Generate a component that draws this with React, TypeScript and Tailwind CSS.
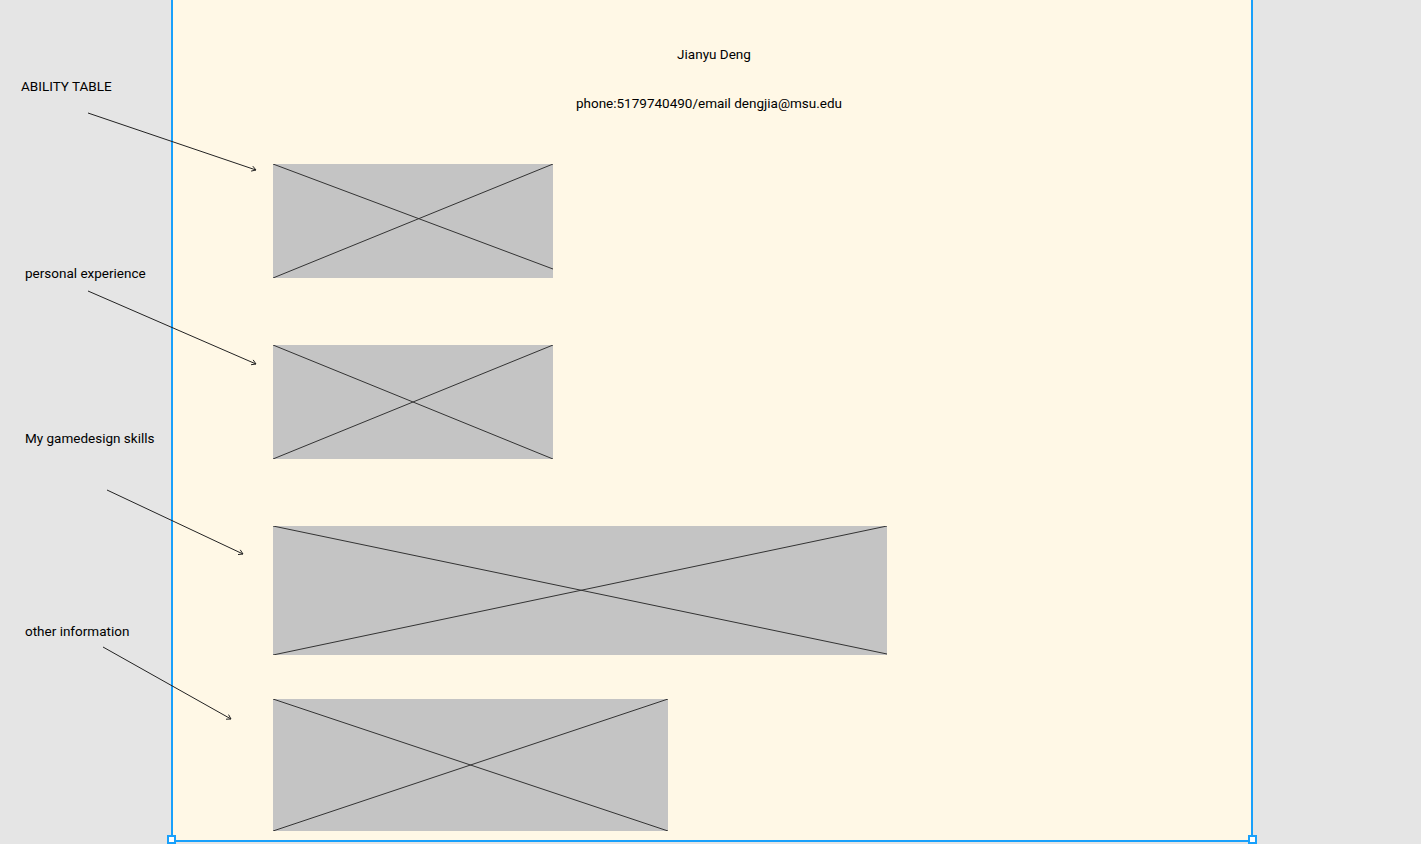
import React from "react"

const boxes = [
  { w: "w-[280px]", h: "h-[114px]", mt: "mt-0", a: [0, 0, 280, 105], b: [0, 114, 280, 0], vb: "0 0 280 114" },
  { w: "w-[280px]", h: "h-[114px]", mt: "mt-[67px]", a: [0, 0, 280, 114], b: [0, 114, 280, 0], vb: "0 0 280 114" },
  { w: "w-[614px]", h: "h-[129px]", mt: "mt-[67px]", a: [0, 0, 614, 128], b: [0, 129, 614, 0], vb: "0 0 614 129" },
  { w: "w-[395px]", h: "h-[132px]", mt: "mt-[44px]", a: [0, 0, 395, 132], b: [0, 132, 395, 0], vb: "0 0 395 132" },
]

const arrows = [
  [88, 113, 256, 170],
  [88, 291, 256, 364],
  [107, 490, 243, 554],
  [103, 647, 231, 719],
]

function Placeholder({ box }: { box: (typeof boxes)[number] }) {
  return (
    <div className={`${box.w} ${box.h} ${box.mt} bg-[#c4c4c4]`}>
      <svg className="w-full h-full block" viewBox={box.vb} preserveAspectRatio="none">
        <line x1={box.a[0]} y1={box.a[1]} x2={box.a[2]} y2={box.a[3]} stroke="#333" strokeWidth="1" />
        <line x1={box.b[0]} y1={box.b[1]} x2={box.b[2]} y2={box.b[3]} stroke="#333" strokeWidth="1" />
      </svg>
    </div>
  )
}

function Arrow({ p }: { p: number[] }) {
  const [x1, y1, x2, y2] = p
  const ang = Math.atan2(y2 - y1, x2 - x1)
  const s = 5
  const h1 = [x2 - s * Math.cos(ang - 0.55), y2 - s * Math.sin(ang - 0.55)]
  const h2 = [x2 - s * Math.cos(ang + 0.55), y2 - s * Math.sin(ang + 0.55)]
  return (
    <g stroke="#222" strokeWidth="1" fill="none">
      <line x1={x1} y1={y1} x2={x2} y2={y2} />
      <polyline points={`${h1[0]},${h1[1]} ${x2},${y2} ${h2[0]},${h2[1]}`} />
    </g>
  )
}

export default function App() {
  return (
    <div className="relative w-[1421px] h-[844px] overflow-hidden bg-[#e5e5e5] font-['Roboto',sans-serif] text-[13.5px] text-black flex">
      {/* left canvas notes */}
      <div className="w-[171px] shrink-0 flex flex-col items-start pt-[78px] leading-4">
        <span className="ml-[21px]">ABILITY TABLE</span>
        <span className="ml-[25px] mt-[171px]">personal experience</span>
        <span className="ml-[25px] mt-[149px]">My gamedesign skills</span>
        <span className="ml-[25px] mt-[177px]">other information</span>
      </div>

      {/* frame */}
      <div className="relative w-[1082px] h-[842px] shrink-0 bg-[#fff8e6] border-x-2 border-b-2 border-[#18a0fb]">
        <div className="flex flex-col items-center pt-[46px]">
          <p className="leading-4 translate-x-[2px]">Jianyu Deng</p>
          <p className="leading-4 mt-[33px] -translate-x-[3px]">phone:5179740490/email dengjia@msu.edu</p>
        </div>
        <div className="flex flex-col pl-[100px] pt-[53px]">
          {boxes.map((b, i) => (
            <Placeholder key={i} box={b} />
          ))}
        </div>
        <div className="absolute -left-[6px] -bottom-[4px] w-[9px] h-[9px] bg-white border-2 border-[#18a0fb]" />
        <div className="absolute -right-[6px] -bottom-[4px] w-[9px] h-[9px] bg-white border-2 border-[#18a0fb]" />
      </div>

      <svg className="absolute inset-0 pointer-events-none" width="1421" height="844">
        {arrows.map((p, i) => (
          <Arrow key={i} p={p} />
        ))}
      </svg>
    </div>
  )
}
